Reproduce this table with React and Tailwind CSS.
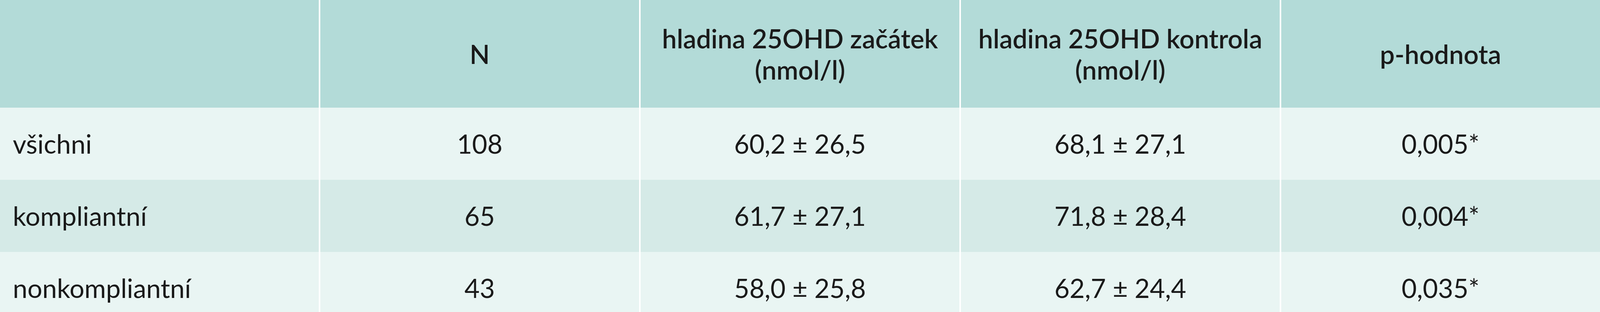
import React from "react";

const rows = [
  ["všichni", "108", "60,2 ± 26,5", "68,1 ± 27,1", "0,005*"],
  ["kompliantní", "65", "61,7 ± 27,1", "71,8 ± 28,4", "0,004*"],
  ["nonkompliantní", "43", "58,0 ± 25,8", "62,7 ± 24,4", "0,035*"],
];

export default function App() {
  return (
    <div
      className="w-full h-screen overflow-hidden bg-[#e9f5f3] text-[#1a1a1a] text-[1.64vw] leading-[1.965vw]"
      style={{ fontFamily: "Lato, 'Noto Sans', sans-serif" }}
    >
      <div className="grid grid-cols-5 gap-x-[0.09vw] h-[34.5vh] bg-white">
        <div className="bg-[#b3dbd8]" />
        <div className="bg-[#b3dbd8] flex items-center justify-center font-semibold">N</div>
        <div className="bg-[#b3dbd8] flex items-center justify-center text-center font-semibold">
          hladina 25OHD začátek
          <br />
          (nmol/l)
        </div>
        <div className="bg-[#b3dbd8] flex items-center justify-center text-center font-semibold">
          hladina 25OHD kontrola
          <br />
          (nmol/l)
        </div>
        <div className="bg-[#b3dbd8] flex items-center justify-center font-semibold">p-hodnota</div>
      </div>
      {rows.map((r, i) => (
        <div key={i} className="grid grid-cols-5 gap-x-[0.09vw] h-[23.125vh] bg-white">
          {r.map((c, j) => (
            <div
              key={j}
              className={
                (i % 2 === 0 ? "bg-[#e9f5f3] " : "bg-[#d5eae7] ") +
                (j === 0
                  ? "flex items-center pl-[0.8vw]"
                  : "flex items-center justify-center")
              }
            >
              {c}
            </div>
          ))}
        </div>
      ))}
    </div>
  );
}
